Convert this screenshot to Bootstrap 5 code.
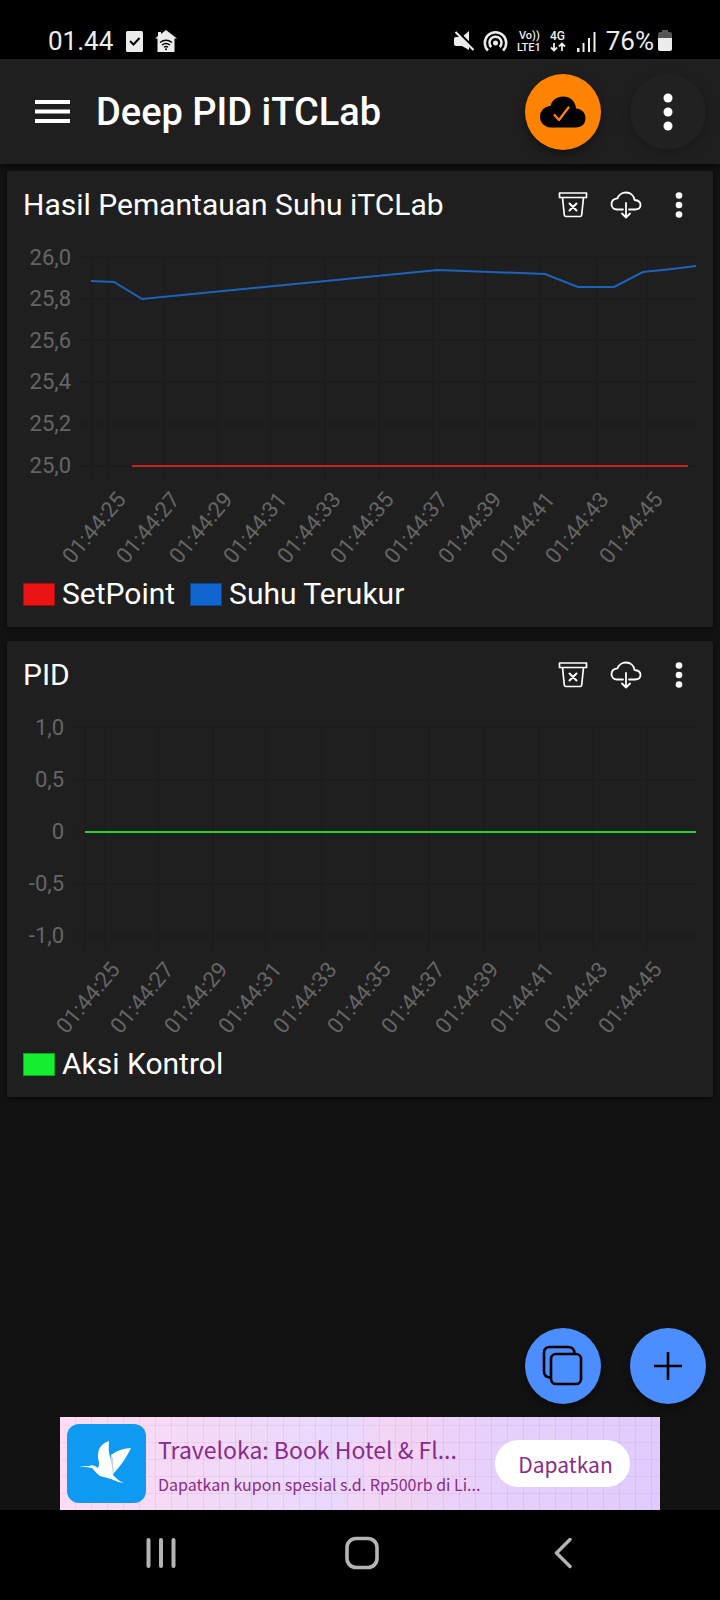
<!DOCTYPE html>
<html lang="id">
<head>
<meta charset="utf-8">
<meta name="viewport" content="width=device-width, initial-scale=1">
<title>Deep PID iTCLab</title>
<link href="https://cdn.jsdelivr.net/npm/bootstrap@5.3.0/dist/css/bootstrap.min.css" rel="stylesheet">
<style>
  body { background: #121212; color: #fff; font-family: Roboto, "Liberation Sans", sans-serif; }
  svg { display: block; flex: none; }
  .status { background: #000; color: #ececec; min-height: 59px; padding: 23px 48px 0; font-size: 26px; line-height: 36px; }
  .topbar { background: #1f1f1f; min-height: 105px; padding: 0 14px 0 32px; box-shadow: 0 2px 6px rgba(0,0,0,.6); }
  .topbar h1 { font-size: 38px; line-height: 44px; font-weight: 500; }
  .plain { background: none; border: 0; padding: 0; color: #fff; display: flex; align-items: center; justify-content: center; }
  .round { width: 76px; height: 76px; border: 0; padding: 0; border-radius: 50%; display: flex; align-items: center; justify-content: center; box-shadow: 0 4px 10px rgba(0,0,0,.4); color: #000; }
  .round-orange { background: #ff8200; }
  .round-dark { background: #212121; color: #fff; box-shadow: 0 3px 10px rgba(0,0,0,.25); }
  .round-blue { background: #4c8dff; }
  .pairgap { gap: 29px; }
  .panels { padding: 7px 7px 0; gap: 14px; }
  .panel { background: #1f1f1f; border-radius: 2px; box-shadow: 0 2px 6px rgba(0,0,0,.5); }
  .panel-head { height: 68px; padding: 0 8px 0 16px; }
  .panel-head h2, .legend { font-size: 30px; line-height: 36px; font-weight: 400; }
  .panel-head .plain { width: 53px; height: 52px; }
  .chart { width: 100%; height: auto; font-size: 22px; }
  .chart text { fill: #656565; text-anchor: end; }
  .chart .gridlines { stroke: #1c1c1c; stroke-width: 2; fill: none; }
  .chart polyline { fill: none; stroke-width: 2; }
  .legend { padding: 5px 16px 15px; gap: 15px; list-style: none; margin: 0; }
  .legend li { display: flex; align-items: center; gap: 7px; }
  .swatch { width: 32px; height: 23px; border: 1px solid rgba(0,0,0,.3); }
  .red { background: #eb1313; } .blue { background: #1065d0; } .green { background: #13ee2e; }
  .fabs { padding: 0 14px 13px; }
  .ad { width: calc(100% - 120px); min-height: 93px; padding: 7px 30px 7px 7px; color: #892b87; font-family: "Noto Sans CJK SC", sans-serif;
    background: repeating-linear-gradient(90deg, transparent 0 15px, rgba(120,70,140,.09) 15px 16px), repeating-linear-gradient(0deg, transparent 0 16px, rgba(120,70,140,.08) 16px 17px), linear-gradient(100deg, #ffdcf3 0, #f4d9f6 22%, #e9d9ff 46%, #f4d4f4 54%, #e6d0fc 72%, #e0cbff 100%); }
  .ad-copy { padding-left: 12px; }
  .ad-name { font-size: 23px; line-height: 40px; }
  .ad-text { font-size: 16px; line-height: 30px; }
  .ad-btn { background: #fff; color: #892b87; border: 0; border-radius: 24px; height: 47px; width: 135px; padding: 0 0 0 6px; font-size: 21px; line-height: 30px; flex: none; }
  .sysnav { background: #000; height: 90px; padding: 0 56px 4px 60px; }
  .sysnav .plain { color: #b4b4b4; flex: 1; }
</style>
</head>
<body>
<div class="d-flex flex-column min-vh-100">
  <div class="status d-flex justify-content-between">
    <div class="d-flex align-items-center">
      <span>01.44</span>
      <svg style="margin-left:13px;margin-right:12px" width="17" height="21" viewBox="0 0 17 21" aria-hidden="true"><rect width="17" height="21" rx="1.5" fill="#ececec"/><path d="M4 10l3.500 3.500 6-6.500" fill="none" stroke="#000" stroke-width="2"/></svg>
      <svg width="22" height="22" viewBox="0 0 22 22" aria-hidden="true"><path d="M11 0L22 8.500H19.500V22H2.500V8.500H0L3 6V2H6V4z" fill="#ececec"/><g fill="none" stroke="#000" stroke-width="1.400"><path d="M5 12.500q6-4.500 12 0M7 15q4-3 8 0M9 17.200q2-1.500 4 0"/></g><circle cx="11" cy="19.300" r="1"/></svg>
    </div>
    <div class="d-flex align-items-center">
      <svg width="20" height="20" viewBox="0 0 20 20" aria-hidden="true"><path d="M0 8Q0 6 2 6H8L15 0V19L8 15H2Q0 15 0 13z" fill="#ececec"/><path d="M3 0L21 18" stroke="#000" stroke-width="2.500"/><path d="M1.500 1L19.500 19" stroke="#ececec" stroke-width="2.200"/></svg>
      <svg style="margin-left:9px" width="25" height="22" viewBox="0 0 24 22" fill="none" stroke="#ececec" stroke-width="2.500" aria-hidden="true"><path d="M4.500 20.500A10.700 10.700 0 1 1 19.500 20.500M7.800 17A6 6 0 1 1 16.200 17"/><circle cx="12" cy="13" r="2.500" fill="#ececec" stroke="none"/></svg>
      <svg style="margin-left:7px" width="29" height="24" viewBox="0 0 29 24" fill="#ececec" font-size="11" font-weight="500" aria-hidden="true"><text x="4" y="10">Vo))</text><text x="2" y="22">LTE1</text></svg>
      <svg style="margin-left:3px" width="22" height="26" viewBox="0 0 22 26" fill="#ececec" aria-hidden="true"><text x="3" y="12" font-size="12" font-weight="500">4G</text><path d="M7 15V22M4 19.500L7 22.500 10 19.500M15 23V16M12 18.500L15 15.500 18 18.500" fill="none" stroke="#ececec" stroke-width="1.800"/></svg>
      <svg style="margin-left:8px" width="20" height="21" viewBox="0 0 20 21" fill="#ececec" aria-hidden="true"><path d="M0 17h2.500v4H0zM5.500 12H7.500v9H5.500zM11 7h2v14H11zM16.500 1H18.500v20h-2z"/></svg>
      <span style="margin-left:9px">76%</span>
      <svg style="margin-left:4px" width="14" height="22" viewBox="0 0 14 22" aria-hidden="true"><path d="M4 0H10V2H12Q14 2 14 4V9H0V4Q0 2 2 2H4z" fill="#555"/><path d="M0 8H14V19Q14 21 12 21H2Q0 21 0 19z" fill="#ececec"/></svg>
    </div>
  </div>

  <header class="topbar d-flex align-items-center">
    <button type="button" class="plain" aria-label="Menu"><svg width="40" height="32" viewBox="0 0 40 32" stroke="#fff" stroke-width="4.200"><path d="M3 6H38M3 15.500H38M3 25H38"/></svg></button>
    <h1 class="mb-0 ms-4 me-auto">Deep PID iTCLab</h1>
    <div class="d-flex pairgap">
      <button type="button" class="round round-orange" aria-label="Terhubung"><svg width="46" height="32" viewBox="0 0 46 32"><path d="M11 31.500A10.700 10.700 0 0 1 10.500 10C12 4 17 .500 23 .500C30 .500 35.500 5 36 12.500C42 13 45.500 17 45.500 22C45.500 28 41.500 31.500 36 31.500z"/><path d="M14.500 19L19 24 28.500 11.500" fill="none" stroke="#ff8200" stroke-width="2.300" stroke-linecap="round" stroke-linejoin="round"/></svg></button>
      <button type="button" class="round round-dark" aria-label="Opsi"><svg width="10" height="40" viewBox="0 0 10 40" fill="#fff"><circle cx="5" cy="6" r="4.500"/><circle cx="5" cy="20" r="4.500"/><circle cx="5" cy="34" r="4.500"/></svg></button>
    </div>
  </header>

  <svg width="0" height="0" class="position-absolute" aria-hidden="true">
    <symbol id="bin" viewBox="0 0 30 28"><g fill="none" stroke="#fff" stroke-width="1.700" stroke-linejoin="round"><path d="M1.500 2H28.500V6.500H1.500zM4.500 6.500L6.300 24Q6.500 25.500 8 25.500H22Q23.500 25.500 23.700 24L25.500 6.500"/><path d="M11.500 12.500L18.500 19.500M18.500 12.500L11.500 19.500" stroke-width="2" stroke-linecap="round"/></g></symbol>
    <symbol id="cloud" viewBox="0 0 32 28"><g fill="none" stroke="#fff" stroke-width="1.800" stroke-linecap="round" stroke-linejoin="round"><path d="M13 18.500H7C3.500 18.500 1.500 16 1.500 13C1.500 10 4 7.700 7.500 7.300C8.500 4 12 1.500 16 1.500C20.500 1.500 24 4.500 24.500 9C28 9.300 30.500 11 30.500 14C30.500 17 28 18.500 25 18.500H19M16 12V26M12 22.500L16 26.500 20 22.500"/></g></symbol>
    <symbol id="dots" viewBox="0 0 8 28"><g fill="#fff"><circle cx="4" cy="4.500" r="3.300"/><circle cx="4" cy="14" r="3.300"/><circle cx="4" cy="23.500" r="3.300"/></g></symbol>
  </svg>

  <main class="panels d-flex flex-column">
    <section class="panel">
      <div class="panel-head d-flex align-items-center">
        <h2 class="mb-0 me-auto">Hasil Pemantauan Suhu iTCLab</h2>
        <button type="button" class="plain" aria-label="Hapus data"><svg width="30" height="28"><use href="#bin"/></svg></button>
        <button type="button" class="plain" aria-label="Unduh"><svg width="32" height="28"><use href="#cloud"/></svg></button>
        <button type="button" class="plain" aria-label="Opsi panel"><svg width="8" height="28"><use href="#dots"/></svg></button>
      </div>
      <svg class="chart" viewBox="0 0 706 332" role="img" aria-label="Grafik suhu">
        <path class="gridlines" d="M73 18H689M73 60H689M73 101H689M73 143H689M73 185H689M73 227H689M85 18V240M101 18V240M157 18V240M211 18V240M263 18V240M318 18V240M372 18V240M426 18V240M478 18V240M533 18V240M590 18V240M640 18V240"/>
        <text x="64" y="26">26,0</text><text x="64" y="67">25,8</text><text x="64" y="109">25,6</text><text x="64" y="150">25,4</text><text x="64" y="192">25,2</text><text x="64" y="234">25,0</text>
        <polyline stroke="#c92222" points="125,227 681,227"/>
        <polyline stroke="#1d62bd" points="84,42 107,43 135,60 431,31 538,35 571,48 607,48 636,33 665,30 689,27"/>
        <text transform="translate(120 261) rotate(-50)">01:44:25</text><text transform="translate(174 261) rotate(-50)">01:44:27</text><text transform="translate(227 261) rotate(-50)">01:44:29</text><text transform="translate(281 261) rotate(-50)">01:44:31</text><text transform="translate(335 261) rotate(-50)">01:44:33</text><text transform="translate(388 261) rotate(-50)">01:44:35</text><text transform="translate(442 261) rotate(-50)">01:44:37</text><text transform="translate(496 261) rotate(-50)">01:44:39</text><text transform="translate(549 261) rotate(-50)">01:44:41</text><text transform="translate(603 261) rotate(-50)">01:44:43</text><text transform="translate(657 261) rotate(-50)">01:44:45</text>
      </svg>
      <ul class="legend d-flex"><li><span class="swatch red"></span>SetPoint</li><li><span class="swatch blue"></span>Suhu Terukur</li></ul>
    </section>

    <section class="panel">
      <div class="panel-head d-flex align-items-center">
        <h2 class="mb-0 me-auto">PID</h2>
        <button type="button" class="plain" aria-label="Hapus data"><svg width="30" height="28"><use href="#bin"/></svg></button>
        <button type="button" class="plain" aria-label="Unduh"><svg width="32" height="28"><use href="#cloud"/></svg></button>
        <button type="button" class="plain" aria-label="Opsi panel"><svg width="8" height="28"><use href="#dots"/></svg></button>
      </div>
      <svg class="chart" viewBox="0 0 706 332" role="img" aria-label="Grafik aksi kontrol">
        <path class="gridlines" d="M66 18H689M66 71H689M66 123H689M66 175H689M66 227H689M78 18V240M98 18V240M151 18V240M206 18V240M259 18V240M315 18V240M367 18V240M422 18V240M477 18V240M532 18V240M586 18V240M640 18V240"/>
        <text x="57" y="26">1,0</text><text x="57" y="78">0,5</text><text x="57" y="130">0</text><text x="57" y="182">-0,5</text><text x="57" y="234">-1,0</text>
        <polyline stroke="#22cf3c" points="78,123 689,123"/>
        <text transform="translate(114 261) rotate(-50)">01:44:25</text><text transform="translate(168 261) rotate(-50)">01:44:27</text><text transform="translate(222 261) rotate(-50)">01:44:29</text><text transform="translate(276 261) rotate(-50)">01:44:31</text><text transform="translate(331 261) rotate(-50)">01:44:33</text><text transform="translate(385 261) rotate(-50)">01:44:35</text><text transform="translate(439 261) rotate(-50)">01:44:37</text><text transform="translate(493 261) rotate(-50)">01:44:39</text><text transform="translate(548 261) rotate(-50)">01:44:41</text><text transform="translate(602 261) rotate(-50)">01:44:43</text><text transform="translate(656 261) rotate(-50)">01:44:45</text>
      </svg>
      <ul class="legend d-flex"><li><span class="swatch green"></span>Aksi Kontrol</li></ul>
    </section>
  </main>

  <div class="fabs pairgap d-flex justify-content-end mt-auto">
    <button type="button" class="round round-blue" aria-label="Salin"><svg width="42" height="42" viewBox="0 0 42 42" fill="none" stroke="#000" stroke-width="2.600"><rect x="9" y="9" width="30" height="30" rx="5"/><path d="M9 32.500H8Q2 32 2 26.500V8Q2 2 8 2H26Q32 2 32.500 8V9"/></svg></button>
    <button type="button" class="round round-blue" aria-label="Tambah"><svg width="28" height="28" viewBox="0 0 28 28" stroke="#000" stroke-width="2.600"><path d="M14 0V28M0 14H28"/></svg></button>
  </div>

  <aside class="ad d-flex align-items-center mx-auto">
    <svg width="79" height="79" viewBox="0 0 79 79" aria-hidden="true"><rect width="79" height="79" rx="12" fill="#0f9af2"/><path d="M42 55L44 31Q51 25 64 24Q58 37 47 49z" fill="#fff"/><path d="M42 54L44 31L46 34Q46 42 47 49z" fill="#ccd3d8"/><path d="M12 42L22 42Q26 40 31 44Q33 40 31 34Q30 21 42 17Q41 26 43 33Q45 41 46 51Q50 56 57 59Q50 58 44 55Q37 53 33 52Q29 49 25 44Q19 43 12 42z" fill="#fff"/></svg>
    <div class="ad-copy me-auto text-nowrap">
      <div class="ad-name">Traveloka: Book Hotel &amp; Fl...</div>
      <div class="ad-text">Dapatkan kupon spesial s.d. Rp500rb di Li...</div>
    </div>
    <button type="button" class="ad-btn">Dapatkan</button>
  </aside>

  <nav class="sysnav d-flex" aria-label="Navigasi sistem">
    <button type="button" class="plain" aria-label="Terbaru"><svg width="30" height="32" viewBox="0 0 30 32" stroke="currentColor" stroke-width="4" stroke-linecap="round"><path d="M2.500 3V29M15 3V29M27.500 3V29"/></svg></button>
    <button type="button" class="plain" aria-label="Beranda"><svg width="34" height="34" viewBox="0 0 34 34" fill="none" stroke="currentColor" stroke-width="3.600"><rect x="2" y="2.500" width="30" height="29" rx="9"/></svg></button>
    <button type="button" class="plain" aria-label="Kembali"><svg width="18" height="32" viewBox="0 0 18 32" fill="none" stroke="currentColor" stroke-width="3.500" stroke-linecap="round" stroke-linejoin="round"><path d="M16 2.500L2.500 16 16 29.500"/></svg></button>
  </nav>
</div>
<script src="https://cdn.jsdelivr.net/npm/bootstrap@5.3.0/dist/js/bootstrap.bundle.min.js"></script>
</body>
</html>
